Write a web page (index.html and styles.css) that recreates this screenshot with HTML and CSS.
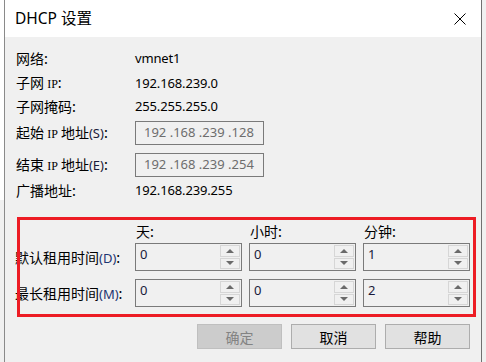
FILE: index.html
```html
<!DOCTYPE html>
<html lang="zh-CN">
<head>
<meta charset="utf-8">
<title>DHCP 设置</title>
<link rel="stylesheet" href="styles.css">
</head>
<body>
<div class="backdrop"></div>
<div class="dialog">
  <div class="titlebar">
    <span class="title">DHCP 设置</span>
    <svg class="close" width="12" height="12" viewBox="0 0 12 12"><path d="M0.5 0.5 L11.5 11.5 M11.5 0.5 L0.5 11.5" stroke="#000" stroke-width="1" fill="none"/></svg>
  </div>
  <div class="content">
    <div class="info">
      <div class="row"><span class="label">网络:</span><span class="value">vmnet1</span></div>
      <div class="row"><span class="label">子网 <span class="ip">IP</span>:</span><span class="value">192.168.239.0</span></div>
      <div class="row"><span class="label">子网掩码:</span><span class="value">255.255.255.0</span></div>
      <div class="row row-input"><span class="label">起始 <span class="ip">IP</span> 地址<span class="acc">(S)</span>:</span><span class="ipbox">192 .168 .239 .128</span></div>
      <div class="row row-input"><span class="label">结束 <span class="ip">IP</span> 地址<span class="acc">(E)</span>:</span><span class="ipbox">192 .168 .239 .254</span></div>
      <div class="row row-last"><span class="label">广播地址:</span><span class="value">192.168.239.255</span></div>
    </div>
    <div class="lease">
      <span></span>
      <span class="head">天:</span>
      <span class="head">小时:</span>
      <span class="head">分钟:</span>

      <span class="llabel">默认租用时间<span class="acc2">(D)</span>:</span>
      <div class="spin"><span class="num">0</span><div class="btns"><span class="up"></span><span class="down"></span></div></div>
      <div class="spin"><span class="num">0</span><div class="btns"><span class="up"></span><span class="down"></span></div></div>
      <div class="spin"><span class="num">1</span><div class="btns"><span class="up"></span><span class="down"></span></div></div>

      <span class="llabel">最长租用时间<span class="acc2">(M)</span>:</span>
      <div class="spin"><span class="num">0</span><div class="btns"><span class="up"></span><span class="down"></span></div></div>
      <div class="spin"><span class="num">0</span><div class="btns"><span class="up"></span><span class="down"></span></div></div>
      <div class="spin"><span class="num">2</span><div class="btns"><span class="up"></span><span class="down"></span></div></div>
    </div>
    <div class="actions">
      <button class="btn disabled">确定</button>
      <button class="btn">取消</button>
      <button class="btn">帮助</button>
    </div>
  </div>
</div>
<div class="highlight"></div>
</body>
</html>
```
FILE: styles.css
```css
html, body {
  margin: 0;
  padding: 0;
}
body {
  width: 486px;
  height: 362px;
  overflow: hidden;
  background: #f0f0f0;
  font-family: "Noto Sans", "Noto Sans CJK SC", sans-serif;
  color: #000;
  display: flex;
}
.backdrop {
  width: 4px;
  flex: none;
  background: linear-gradient(#fff 0, #fff 200px, #f0f0f0 200px);
}
.dialog {
  width: 476px;
  height: 362px;
  flex: none;
  border-left: 1px solid #8a8a8a;
  border-right: 1px solid #707070;
  background: #f0f0f0;
  display: flex;
  flex-direction: column;
}
.titlebar {
  height: 37px;
  background: #fff;
  display: flex;
  align-items: center;
  justify-content: space-between;
  padding: 0 15px 0 10px;
}
.title {
  font-size: 15.5px;
  line-height: 20px;
  font-family: "Noto Sans", "Noto Sans CJK SC", sans-serif;
  padding-bottom: 1px;
}
.close {
  display: block;
}
.content {
  padding: 9px 11px 0 11px;
  display: flex;
  flex-direction: column;
}
.info {
  display: flex;
  flex-direction: column;
}
.row {
  display: grid;
  grid-template-columns: 119px 1fr;
  height: 24px;
  align-items: center;
}
.row-input {
  height: 32px;
  align-items: start;
}
.row-input + .row-input {
  height: 28px;
}
.row-last {
  height: 30px;
  align-items: start;
}
.label {
  font-size: 14px;
  line-height: 24px;
  font-family: "Noto Sans CJK SC", sans-serif;
  white-space: nowrap;
}
.row-input .label {
  line-height: 20px;
  margin-top: 4px;
}
.ip {
  font-family: "Liberation Serif", serif;
  font-size: 12px;
}
.acc, .acc2 {
  font-family: "Noto Sans", sans-serif;
  font-size: 13px;
  color: #1a1a3a;
}
.acc2 {
  color: #1c3570;
}
.value {
  font-size: 13px;
  line-height: 24px;
  font-family: "Noto Sans", sans-serif;
  letter-spacing: -0.15px;
}
.ipbox {
  width: 129px;
  height: 24px;
  box-sizing: border-box;
  border: 1px solid #7a7a7a;
  background: #f0f0f0;
  color: #6d6d6d;
  font-size: 13px;
  line-height: 21px;
  padding-left: 8px;
  margin-top: 3px;
  white-space: nowrap;
}
.lease {
  margin-top: 11px;
  display: grid;
  grid-template-columns: 112px 107px 107px 107px;
  grid-template-rows: 16px 28px 28px;
  column-gap: 7px;
  row-gap: 8px;
}
.lease .head {
  font-size: 14px;
  line-height: 24px;
  height: 24px;
  font-family: "Noto Sans CJK SC", sans-serif;
  padding-left: 1px;
  align-self: start;
}
.llabel {
  font-size: 14px;
  line-height: 28px;
  font-family: "Noto Sans CJK SC", sans-serif;
  white-space: nowrap;
  margin-left: -1px;
}
.spin {
  box-sizing: border-box;
  border: 1px solid #7a7a7a;
  background: #f0f0f0;
  display: flex;
  justify-content: space-between;
}
.num {
  font-size: 13px;
  line-height: 20px;
  padding: 0 0 0 4px;
  color: #1a1a3a;
}
.btns {
  width: 20px;
  display: flex;
  flex-direction: column;
  gap: 1px;
  padding: 1px 1px 1px 0;
}
.btns span {
  flex: 1;
  box-sizing: border-box;
  border: 1px solid #d6d6d6;
  background: #f0f0f0;
  display: flex;
  align-items: center;
  justify-content: center;
}
.btns .up::before {
  content: "";
  border-left: 4px solid transparent;
  border-right: 4px solid transparent;
  border-bottom: 4px solid #6a6a6a;
}
.btns .down::before {
  content: "";
  border-left: 4px solid transparent;
  border-right: 4px solid transparent;
  border-top: 4px solid #6a6a6a;
}
.actions {
  margin-top: 17px;
  display: flex;
  justify-content: flex-end;
  gap: 9px;
}
.btn {
  width: 85px;
  height: 25px;
  box-sizing: border-box;
  border: 1px solid #adadad;
  background: #e1e1e1;
  font-family: "Noto Sans CJK SC", sans-serif;
  font-size: 14px;
  line-height: 20px;
  padding: 0;
  color: #000;
}
.btn.disabled {
  background: #cccccc;
  border-color: #bfbfbf;
  color: #838383;
}
.highlight {
  position: absolute;
  left: 17px;
  top: 217px;
  width: 459px;
  height: 100px;
  box-sizing: border-box;
  border: 3px solid #ed1c24;
  pointer-events: none;
}
```
